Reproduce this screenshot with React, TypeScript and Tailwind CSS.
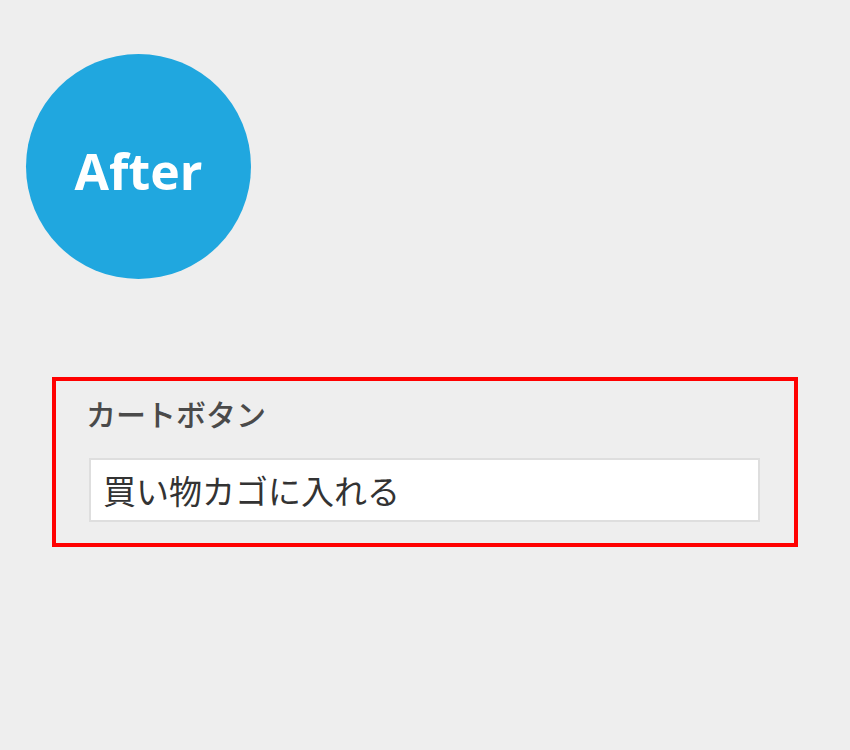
import * as React from "react";

export default function App(): React.ReactElement {
  return (
    <div className="w-full h-[750px] bg-[#eeeeee] pt-[54px] overflow-hidden">
      <div className="ml-[26px] w-[225px] h-[225px] rounded-full bg-[#20a7df] flex items-center justify-center">
        <span className="text-white font-bold text-[50px] leading-none font-['Open_Sans',sans-serif] mt-[8px]">
          After
        </span>
      </div>

      <div className="ml-[52px] mt-[98px] w-[746px] h-[170px] border-4 border-[#ff0000] flex flex-col pt-[17px] pl-[30px]">
        <label className="text-[30px] leading-[31px] font-medium text-[#4a4a4a] font-['Noto_Sans_CJK_JP',sans-serif]">
          カートボタン
        </label>
        <div className="mt-[29px] ml-[3px] w-[671px] h-[64px] bg-white border-2 border-[#dedede] flex items-center pl-[12px]">
          <span className="text-[33px] leading-none text-[#333333] font-['Noto_Sans_CJK_JP',sans-serif]">
            買い物カゴに入れる
          </span>
        </div>
      </div>
    </div>
  );
}
